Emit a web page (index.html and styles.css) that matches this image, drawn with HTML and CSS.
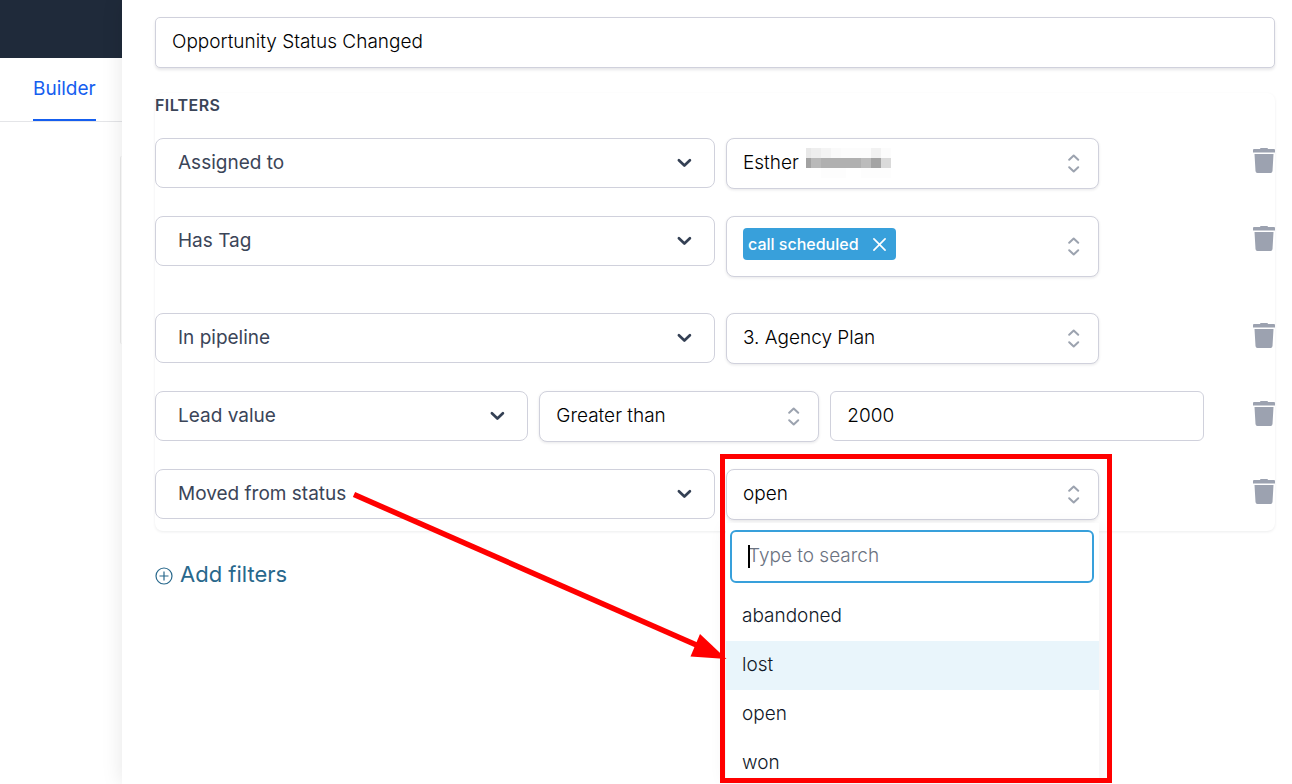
FILE: index.html
```html
<!DOCTYPE html>
<html lang="en">
<head>
<meta charset="utf-8">
<meta name="viewport" content="width=device-width, initial-scale=1">
<title>Opportunity Status Changed</title>
<link rel="stylesheet" href="styles.css">
</head>
<body>
<svg class="sprite" aria-hidden="true">
  <symbol id="chevron" viewBox="0 0 16 16"><path d="M2.900 5.300 8.400 10.500l5.500-5.200" fill="none" stroke="#344054" stroke-width="2.700" stroke-linecap="round" stroke-linejoin="round"/></symbol>
  <symbol id="updown" viewBox="0 0 12 20"><path d="M1.200 5.800 5.700 1.500l4.500 4.300M1.200 13.200l4.500 4.300 4.500-4.300" fill="none" stroke="#9ca3af" stroke-width="2" stroke-linecap="round" stroke-linejoin="round"/></symbol>
  <symbol id="trash" viewBox="0 0 22 25"><path d="M0 2q0-1 1-1h6q0-1 1-1h6q1 0 1 1h6q1 0 1 1v2.500H0zM1.500 6h19l-1 17q-.1 2-2 2h-13q-1.900 0-2-2z" fill="#9ca2b0"/></symbol>
</svg>
<div class="app">
  <div class="side">
    <div class="topbar"></div>
    <nav class="tabs"><a class="tab" href="#builder">Builder</a></nav>
    <div class="canvas"><div class="card"></div></div>
  </div>
  <main class="panel">
    <input class="title" type="text" aria-label="Trigger name" value="Opportunity Status Changed">
    <section class="filters" aria-labelledby="filters-heading">
      <h2 id="filters-heading">Filters</h2>
      <div class="row">
        <div class="field half"><select class="key" aria-label="Filter 1"><option>Assigned to</option></select><svg class="chevron"><use href="#chevron"/></svg></div>
        <div class="field third"><select class="value" aria-label="Assigned to"><option>Esther</option></select><svg class="updown"><use href="#updown"/></svg>
          <svg class="redacted" viewBox="0 0 85 30" shape-rendering="crispEdges" aria-hidden="true">
            <path fill="#e8e8e8" d="M0 0h5v10H0z"/><path fill="#eee" d="M5 0h10v10H5z"/><path fill="#f4f4f4" d="M15 0h10v10H15z"/><path fill="#fafafa" d="M25 0h10v10H25z"/><path fill="#fcfcfc" d="M35 0h50v10H35z"/><path fill="#f2f2f2" d="M65 0h10v10H65z"/>
            <path fill="#a2a2a2" d="M0 10h5v10H0z"/><path fill="#b9b9b9" d="M5 10h10v10H5z"/><path fill="#b0b0b0" d="M15 10h40v10H15z"/><path fill="#bcbcbc" d="M55 10h10v10H55z"/><path fill="#a4a4a4" d="M65 10h10v10H65z"/><path fill="#dadada" d="M75 10h10v10H75z"/>
            <path fill="#fdfdfd" d="M15 20h25v10H15zM55 20h30v10H55z"/>
          </svg>
        </div>
        <button class="trash" aria-label="Delete filter"><svg><use href="#trash"/></svg></button>
      </div>
      <div class="row tall">
        <div class="field half"><select class="key" aria-label="Filter 2"><option>Has Tag</option></select><svg class="chevron"><use href="#chevron"/></svg></div>
        <div class="field third">
          <div class="value tags"><span class="tag">call scheduled<button aria-label="Remove call scheduled"><svg viewBox="0 0 14 14"><path d="M1 1l12 12M13 1 1 13" fill="none" stroke="#fff" stroke-width="1.800" stroke-linecap="round"/></svg></button></span></div>
          <svg class="updown"><use href="#updown"/></svg>
        </div>
        <button class="trash" aria-label="Delete filter"><svg><use href="#trash"/></svg></button>
      </div>
      <div class="row">
        <div class="field half"><select class="key" aria-label="Filter 3"><option>In pipeline</option></select><svg class="chevron"><use href="#chevron"/></svg></div>
        <div class="field third"><select class="value" aria-label="Pipeline"><option>3. Agency Plan</option></select><svg class="updown"><use href="#updown"/></svg></div>
        <button class="trash" aria-label="Delete filter"><svg><use href="#trash"/></svg></button>
      </div>
      <div class="row">
        <div class="field third"><select class="key" aria-label="Filter 4"><option>Lead value</option></select><svg class="chevron"><use href="#chevron"/></svg></div>
        <div class="field quarter"><select class="value" aria-label="Comparison"><option>Greater than</option></select><svg class="updown"><use href="#updown"/></svg></div>
        <div class="field third"><input class="value amount" type="text" aria-label="Lead value" value="2000"></div>
        <button class="trash" aria-label="Delete filter"><svg><use href="#trash"/></svg></button>
      </div>
      <div class="row">
        <div class="field half"><select class="key" aria-label="Filter 5"><option>Moved from status</option></select><svg class="chevron"><use href="#chevron"/></svg>
          <svg class="arrow" viewBox="0 0 380 180" aria-hidden="true"><path d="M3 6.500 350 159" stroke="#f00" stroke-width="5.500"/><path d="M375.500 171 349 146 339.500 168.500z" fill="#f00"/></svg>
        </div>
        <div class="field third">
          <select class="value" aria-label="Moved from status"><option>open</option></select><svg class="updown"><use href="#updown"/></svg>
          <div class="menu">
            <div class="search"><input type="text" aria-label="Search statuses" placeholder="Type to search"><span class="caret"></span></div>
            <ul role="listbox" aria-label="Statuses">
              <li role="option">abandoned</li>
              <li role="option" class="active" aria-selected="true">lost</li>
              <li role="option">open</li>
              <li role="option">won</li>
            </ul>
          </div>
          <div class="highlight"></div>
        </div>
        <button class="trash" aria-label="Delete filter"><svg><use href="#trash"/></svg></button>
      </div>
    </section>
    <button class="add"><svg viewBox="0 0 18 18" aria-hidden="true"><path d="M9 4.500v9M4.500 9h9M17 9A8 8 0 1 1 1 9a8 8 0 0 1 16 0z" fill="none" stroke="#28688c" stroke-width="1.200"/></svg>Add filters</button>
  </main>
</div>
</body>
</html>
```
FILE: styles.css
```css
* { box-sizing: border-box; }
body { margin: 0; background: #fff; font-family: Inter, "Liberation Sans", sans-serif; font-size: 19px; overflow: hidden; }
button, input, select { font: inherit; }
button { background: none; border: 0; padding: 0; cursor: pointer; }
.sprite { display: none; }
.app { display: flex; height: 100vh; }

.side { flex: 0 0 122px; }
.topbar { height: 58px; background: #1f2a3a; }
.tabs { display: flex; height: 64px; padding-left: 33px; border-bottom: 1px solid #e4e5e8; }
.tab { height: 63px; padding-top: 19px; line-height: 24px; color: #155eef; text-decoration: none; border-bottom: 2px solid #155eef; }
.canvas { display: flex; justify-content: flex-end; padding-top: 34px; }
.card { width: 2px; height: 188px; border-left: 1px solid #eee; border-radius: 6px 0 0 6px; }

.panel { position: relative; flex: 1; min-width: 0; padding: 17px 17px 0 33px; background: #fff; box-shadow: 0 0 20px rgba(0, 0, 0, .1); }
.title, .key, .value { width: 100%; border: 1px solid #d0d1dc; background: #fff; outline: 0; appearance: none; }
.title { display: block; height: 51px; padding: 0 16px 2px; border-radius: 5px; font-weight: 300; color: #000; box-shadow: 0 2px 3px rgba(16, 24, 40, .1); }

.filters { margin-top: 25px; padding-bottom: 11px; border-radius: 8px; box-shadow: 0 1px 3px rgba(16, 24, 40, .08); display: flex; flex-direction: column; gap: 27px; }
h2 { margin: 0; height: 18px; padding-top: 2px; font-size: 16px; line-height: 20px; font-weight: 600; letter-spacing: .025em; text-transform: uppercase; color: #3b4558; }
.row { display: flex; align-items: flex-start; gap: 11px; min-height: 51px; }
.tall { min-height: 70px; }
.field { position: relative; display: grid; grid-template-columns: 1fr; align-items: center; justify-items: end; min-width: 0; }
.field > select, .field > input, .field > .tags, .field > .chevron, .field > .updown { grid-area: 1 / 1; }
.half { flex: 0 0 50%; }
.third { flex: 0 0 calc(100% / 3); }
.quarter { flex: 0 0 25%; }
.key { height: 50px; padding: 0 52px 2px 22px; border-radius: 8px; color: #3b4558; }
.value { height: 51px; padding: 0 40px 3px 16px; border-radius: 8px; font-weight: 300; color: #000; box-shadow: 0 1px 3px rgba(16, 24, 40, .1); }
.amount { height: 50px; padding-bottom: 2px; border-radius: 6px; box-shadow: none; }
.chevron { width: 16px; height: 16px; margin-right: 23px; pointer-events: none; }
.updown { width: 12px; height: 20px; margin-right: 19px; pointer-events: none; }
.tags { height: auto; padding: 11px 16px 16px; }
.tag { display: flex; width: fit-content; align-items: center; gap: 14px; height: 32px; padding: 0 10px 0 5px; border-radius: 4px; background: #38a0db; color: #fff; font-size: 16px; font-weight: 500; white-space: nowrap; }
.tag button { display: flex; }
.tag svg { width: 13px; height: 13px; }
.redacted { position: absolute; left: 80px; top: 10px; width: 85px; height: 30px; }
.trash { display: flex; margin: 10px 0 0 auto; }
.trash svg { width: 22px; height: 25px; }

.menu { position: absolute; z-index: 1; top: 54px; left: 0; right: 0; height: 255px; padding-top: 7px; overflow: hidden; background: #fff; box-shadow: 0 4px 16px rgba(16, 24, 40, .08); }
.search { position: relative; padding: 0 5px 0 4px; }
.search input { display: block; width: 100%; height: 53px; padding: 0 16px 2px; border: 2px solid #38a0db; border-radius: 6px; outline: 0; font-weight: 300; }
.search input::placeholder { color: #6b7280; opacity: 1; }
.caret { position: absolute; left: 22px; top: 15px; width: 2px; height: 23px; background: #000; }
.menu ul { margin: 0; padding: 9px 0 0; list-style: none; }
.menu li { height: 49px; padding-left: 16px; line-height: 47px; font-weight: 300; color: #101828; }
.menu .active { background: #e9f5fb; }
.highlight { position: absolute; z-index: 2; top: -15px; left: -6px; right: -13px; height: 329px; border: 5px solid #f00; pointer-events: none; }
.arrow { position: absolute; z-index: 3; left: 196px; top: 19px; width: 380px; height: 180px; pointer-events: none; }

.add { display: flex; align-items: center; gap: 7px; margin-top: 28px; font-size: 22px; line-height: 30px; color: #28688c; }
.add svg { width: 18px; height: 18px; margin-top: 4px; }
```
